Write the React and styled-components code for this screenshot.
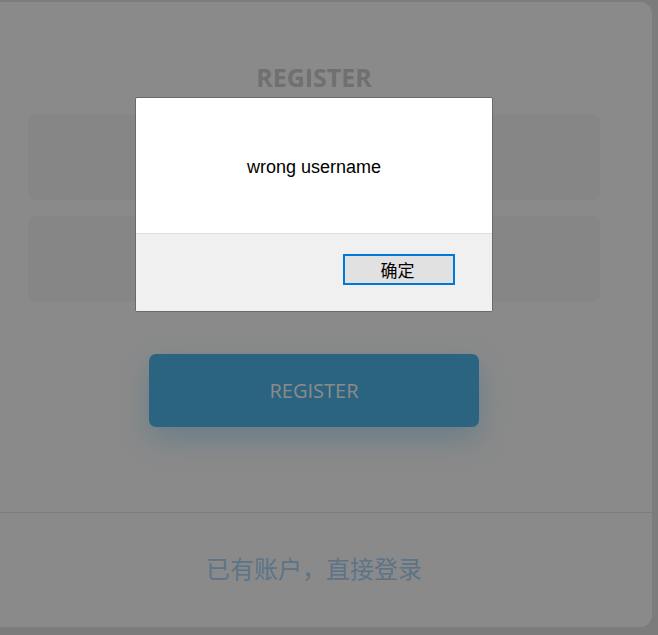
import React from "react";
import styled, { createGlobalStyle } from "styled-components";

const GlobalStyle = createGlobalStyle`
  html, body {
    margin: 0;
    padding: 0;
    background: #e6e6e6;
    overflow: hidden;
  }
`;

const Page = styled.div`
  padding-top: 2px;
  height: 635px;
  box-sizing: border-box;
`;

const Card = styled.div`
  margin-left: -24px;
  width: 676px;
  height: 625px;
  box-sizing: border-box;
  background: #ffffff;
  border-radius: 12px;
  overflow: hidden;
  display: flex;
  flex-direction: column;
`;

const Form = styled.form`
  display: flex;
  flex-direction: column;
  padding: 60px 52px 85px;
`;

const Title = styled.h2`
  margin: 0 0 22px;
  height: 30px;
  line-height: 30px;
  text-align: center;
  font-family: "Open Sans", "Noto Sans", sans-serif;
  font-weight: 700;
  font-size: 25px;
  color: #cfcfcf;
`;

const Field = styled.input`
  display: block;
  height: 86px;
  box-sizing: border-box;
  border: none;
  outline: none;
  border-radius: 7px;
  background: #f7f7f7;
  margin-bottom: ${(p) => (p.$last ? "52px" : "16px")};
`;

const SubmitButton = styled.button`
  align-self: center;
  width: 330px;
  height: 73px;
  border: none;
  border-radius: 7px;
  background: #4eb9ef;
  color: #ffffff;
  font-family: "Open Sans", "Noto Sans", sans-serif;
  font-size: 20px;
  box-shadow: 0 12px 30px rgba(78, 185, 239, 0.35);
  cursor: pointer;
`;

const Divider = styled.div`
  border-top: 1px solid #dde7f0;
`;

const Footer = styled.div`
  flex: 1;
  display: flex;
  align-items: center;
  justify-content: center;
  font-family: "Noto Sans CJK SC", "Noto Sans", sans-serif;
  font-size: 24px;
  color: #abd6fb;
  padding-bottom: 6px;
`;

const Overlay = styled.div`
  position: fixed;
  inset: 0;
  background: rgba(0, 0, 0, 0.46);
`;

const Dialog = styled.div`
  position: fixed;
  left: 135px;
  top: 97px;
  width: 358px;
  height: 215px;
  box-sizing: border-box;
  border: 1px solid #6a6a6a;
  border-radius: 2px;
  background: #ffffff;
  display: flex;
  flex-direction: column;
  overflow: hidden;
`;

const Message = styled.div`
  height: 136px;
  display: flex;
  align-items: center;
  justify-content: center;
  font-family: "Liberation Sans", Arial, sans-serif;
  font-size: 18px;
  color: #000000;
  border-bottom: 1px solid #dfdfdf;
  padding-top: 4px;
  box-sizing: border-box;
`;

const Actions = styled.div`
  flex: 1;
  background: #f0f0f0;
  display: flex;
  align-items: center;
  justify-content: flex-end;
  padding: 0 37px 6px 0;
`;

const OkButton = styled.button`
  width: 112px;
  height: 31px;
  box-sizing: border-box;
  border: 2px solid #0078d7;
  background: #e1e1e1;
  color: #000000;
  font-family: "Noto Sans CJK SC", sans-serif;
  font-size: 17px;
  line-height: 1;
  padding: 0 3px 0 0;
`;

export default function App() {
  return (
    <>
      <GlobalStyle />
      <Page>
        <Card>
          <Form onSubmit={(e) => e.preventDefault()}>
            <Title>REGISTER</Title>
            <Field type="text" />
            <Field type="password" $last />
            <SubmitButton type="submit">REGISTER</SubmitButton>
          </Form>
          <Divider />
          <Footer>已有账户，直接登录</Footer>
        </Card>
      </Page>
      <Overlay />
      <Dialog>
        <Message>wrong username</Message>
        <Actions>
          <OkButton>确定</OkButton>
        </Actions>
      </Dialog>
    </>
  );
}
